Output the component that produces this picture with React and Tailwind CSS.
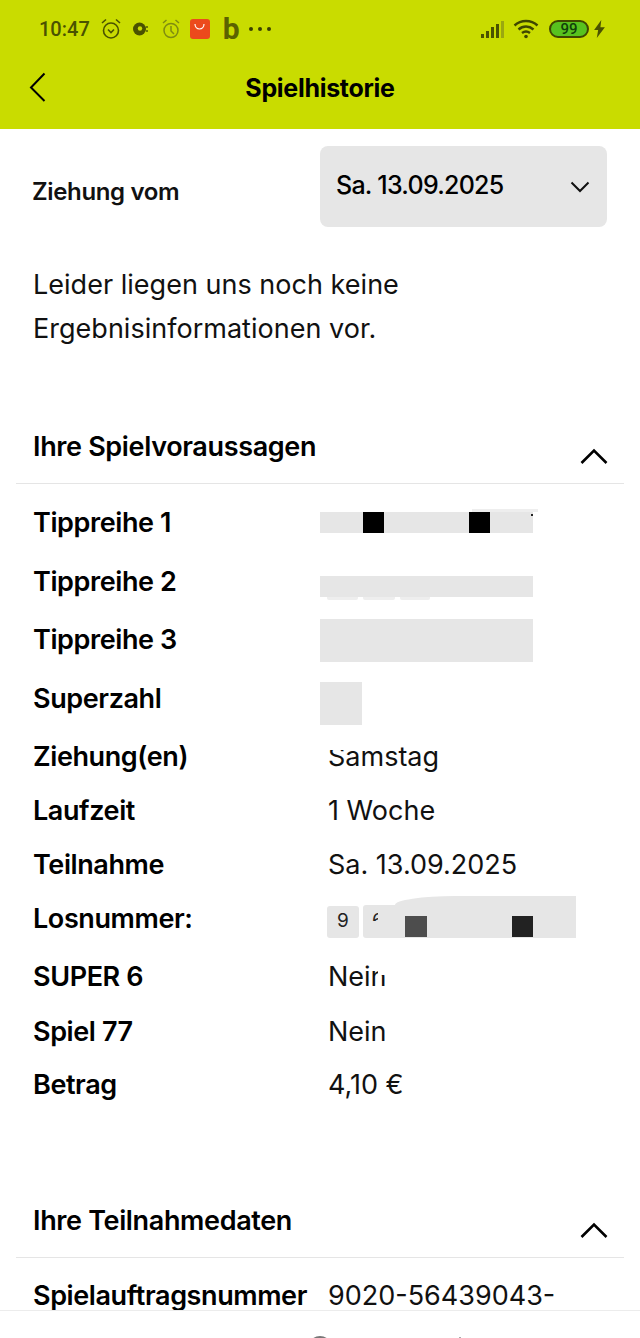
import React from "react";

function Chevron({ className }) {
  return (
    <svg className={className} width="28" height="16" viewBox="0 0 28 16" fill="none" stroke="#000" strokeWidth="2.6">
      <path d="M1.500 15 L14 2.500 L26.500 15" />
    </svg>
  );
}

function Row({ label, value, h = "h-[54px]", extra = "", children }) {
  return (
    <div className={`flex items-center ${h} ${extra} pl-[33px]`}>
      <div className="w-[295px] shrink-0 text-[27px] font-semibold tracking-[-0.4px] text-black">{label}</div>
      {value && <div className="text-[27px] font-normal tracking-[0px] text-[#111]">{value}</div>}
      {children}
    </div>
  );
}

function Section({ title }) {
  return (
    <div className="mx-4 flex h-[77px] items-start justify-between border-b border-[#e5e5e5] pl-[17px] pr-[16px]">
      <div className="mt-[20px] text-[27px] font-semibold tracking-[-0.35px] text-black">{title}</div>
      <Chevron className="mt-[41px]" />
    </div>
  );
}

function Block({ children, className }) {
  return <div className={`relative bg-[#e6e6e6] ${className}`}>{children}</div>;
}

export default function App() {
  return (
    <div className="relative h-[1338px] w-[640px] overflow-hidden bg-white font-['Inter',sans-serif]">
      <header className="h-[129px] bg-[#c9dc00]">
        <div className="flex h-[58px] items-center justify-between pl-[39px] pr-[35px] text-[#4a5200]">
          <div className="flex items-center">
            <span className="font-['Roboto',sans-serif] text-[20px] font-medium leading-none">10:47</span>
            <svg className="ml-[10px]" width="22" height="22" viewBox="0 0 22 22" fill="none" stroke="#4a5200" strokeWidth="1.6">
              <circle cx="11" cy="12.500" r="7.500" />
              <path d="M8 11.500l3 3 3-3M2 5l4-3.500M20 5l-4-3.500" />
            </svg>
            <svg className="ml-[10px]" width="18" height="18" viewBox="0 0 18 18">
              <circle cx="7.500" cy="9" r="6.500" fill="#4a5200" />
              <circle cx="8" cy="8.500" r="2.200" fill="#c9dc00" />
              <path d="M15 6v2M15 10v2" stroke="#4a5200" strokeWidth="1.400" />
            </svg>
            <svg className="ml-[11px]" width="20" height="22" viewBox="0 0 20 22" fill="none" stroke="#7f8c10" strokeWidth="1.500">
              <circle cx="10" cy="12.500" r="7" />
              <path d="M10 8v5l3 3M2 5l3.500-3M18 5l-3.500-3" />
            </svg>
            <div className="ml-[9px] flex h-[20px] w-[20px] items-start justify-center rounded-[3px] bg-[#ec4a1c] pt-[4px]">
              <svg width="11" height="7" viewBox="0 0 11 7" fill="none" stroke="#fff" strokeWidth="1.200">
                <path d="M1 1c0 3 2 5 4.500 5S10 4 10 1" />
              </svg>
            </div>
            <span className="ml-[13px] font-['Roboto',sans-serif] text-[30px] font-bold leading-none text-[#5b6200]">b</span>
            <span className="ml-[9px] flex gap-[5px]">
              <i className="h-[4px] w-[4px] rounded-full bg-[#3a4000]" />
              <i className="h-[4px] w-[4px] rounded-full bg-[#3a4000]" />
              <i className="h-[4px] w-[4px] rounded-full bg-[#3a4000]" />
            </span>
          </div>
          <div className="flex items-center">
            <svg width="24" height="17" viewBox="0 0 24 17" fill="#4a5200">
              <rect x="0" y="13" width="3" height="4" />
              <rect x="5" y="10" width="3" height="7" />
              <rect x="10" y="6" width="3" height="11" />
              <rect x="15" y="3" width="3" height="14" />
              <rect x="20" y="0" width="3" height="17" fill="#9aa810" />
            </svg>
            <svg className="ml-[8px]" width="26" height="22" viewBox="0 0 26 22" fill="none" stroke="#3f4700" strokeWidth="2.400">
              <path d="M1.500 7.500C8 1.500 18 1.500 24.500 7.500M5.500 11.500C10 7.500 16 7.500 20.500 11.500M9 15c2.500-2 5.500-2 8 0" />
              <circle cx="13" cy="18.500" r="1.800" fill="#3f4700" stroke="none" />
            </svg>
            <div className="ml-[10px] flex h-[18px] w-[40px] items-center justify-center rounded-[9px] border-2 border-[#3f4700] bg-[#58c21e] font-['Roboto',sans-serif] text-[15px] font-medium leading-none text-[#10400a]">
              99
            </div>
            <svg className="ml-[5px]" width="11" height="18" viewBox="0 0 12 20" fill="#4a5200">
              <path d="M8 0L0 11h4.500L3 20l9-12H7z" />
            </svg>
          </div>
        </div>
        <div className="relative flex h-[60px] items-center justify-center">
          <svg className="absolute left-[29px] top-[14px]" width="17" height="30" viewBox="0 0 17 30" fill="none" stroke="#000" strokeWidth="2">
            <path d="M15.500 1.500L2 15.500l13.500 13.500" />
          </svg>
          <h1 className="mt-[2px] text-[25px] font-bold tracking-[-0.3px] text-black">Spielhistorie</h1>
        </div>
      </header>

      <div className="flex items-center justify-between pl-[32px] pr-[33px] pt-[17px]">
        <div className="mt-[10px] text-[24px] font-semibold tracking-[-0.35px] text-[#111]">Ziehung vom</div>
        <div className="flex h-[81px] w-[287px] items-start justify-between rounded-[8px] bg-[#e6e6e6] pl-[16px] pr-[17px] pt-[21px]">
          <span className="text-[25px] font-medium tracking-[-0.75px] text-black">Sa. 13.09.2025</span>
          <svg className="mt-[14px]" width="20" height="12" viewBox="0 0 20 12" fill="none" stroke="#111" strokeWidth="2">
            <path d="M1.500 1.500L10 10l8.500-8.500" />
          </svg>
        </div>
      </div>

      <p className="mt-[36px] pl-[33px] text-[27px] font-normal leading-[44px] tracking-[0.02px] text-[#111]">
        Leider liegen uns noch keine
        <br />
        Ergebnisinformationen vor.
      </p>

      <div className="mt-[56px]">
        <Section title="Ihre Spielvoraussagen" />
      </div>

      <div className="pt-[10px]">
        <Row label="Tippreihe 1" h="h-[59px]">
          <Block className="-ml-[8px] flex h-[21px] w-[213px] translate-y-[-1px]">
            <span className="absolute left-[43px] top-0 h-[21px] w-[21px] bg-black" />
            <span className="absolute left-[149px] top-0 h-[21px] w-[21px] bg-black" />
            <span className="absolute left-[152px] top-[-3px] h-[3px] w-[66px] bg-[#eeeeee]" />
            <span className="absolute left-[211px] top-[2px] h-[2px] w-[2px] bg-[#222]" />
          </Block>
        </Row>
        <Row label="Tippreihe 2" h="h-[58px]">
          <Block className="-ml-[8px] mt-[8px] h-[21px] w-[213px]">
            <span className="absolute left-[7px] top-[21px] h-[3px] w-[31px] rounded-b-[2px] bg-[#eeeeee]" />
            <span className="absolute left-[43px] top-[21px] h-[3px] w-[32px] rounded-b-[2px] bg-[#eeeeee]" />
            <span className="absolute left-[80px] top-[21px] h-[3px] w-[30px] rounded-b-[2px] bg-[#eeeeee]" />
          </Block>
        </Row>
        <Row label="Tippreihe 3" h="h-[59px]">
          <Block className="-ml-[8px] mt-[-1px] h-[43px] w-[213px]" />
        </Row>
        <Row label="Superzahl" h="h-[59px]">
          <Block className="-ml-[8px] mt-[8px] h-[43px] w-[42px]" />
        </Row>
        <Row label="Ziehung(en)" h="h-[55px]" extra="pt-[2px]">
          <div className="relative text-[27px] font-normal text-[#111]">
            Samstag
            <span className="absolute left-0 top-0 h-[13px] w-[17px] bg-white" />
          </div>
        </Row>
        <Row label="Laufzeit" value="1 Woche" />
        <Row label="Teilnahme" value="Sa. 13.09.2025" />
        <Row label="Losnummer:">
          <div className="-ml-[1px] mt-[5px] flex items-center gap-[4px]">
            <div className="flex h-[32px] w-[32px] items-center justify-center rounded-[3px] bg-[#e6e6e6] text-[19px] text-[#222]">9</div>
            <Block className="h-[33px] w-[213px] rounded-l-[3px]">
              <span className="absolute left-[9px] top-[2px] text-[19px] leading-[28px] text-[#222]">6</span>
              <span className="absolute left-[7px] top-[16px] h-[16px] w-[18px] bg-[#e6e6e6]" />
              <span className="absolute left-[15px] top-[4px] h-[14px] w-[10px] bg-[#e6e6e6]" />
              <span className="absolute left-[32px] top-[-9px] h-[9px] w-[181px] rounded-tl-[60px_9px] bg-[#e6e6e6]" />
              <span className="absolute left-[42px] top-[11px] h-[21px] w-[22px] bg-[#4d4d4d]" />
              <span className="absolute left-[149px] top-[11px] h-[21px] w-[21px] bg-[#222]" />
            </Block>
          </div>
        </Row>
        <Row label="SUPER 6" h="h-[62px]">
          <div className="relative text-[27px] font-normal text-[#111]">
            Nein
            <span className="absolute right-[-1px] top-[5px] h-[13px] w-[10px] bg-white" />
          </div>
        </Row>
        <Row label="Spiel 77" value="Nein" h="h-[48px]" />
        <Row label="Betrag" value="4,10 €" h="h-[58px]" />
      </div>

      <div className="mt-[67px]">
        <Section title="Ihre Teilnahmedaten" />
      </div>

      <div className="pt-[11px]">
        <Row label="Spielauftragsnummer" value="9020-56439043-" />
      </div>

      <div className="absolute bottom-0 left-0 right-0 h-[28px] overflow-hidden border-t border-[#ececec] bg-white">
        <span className="absolute left-[308px] top-[25px] h-[24px] w-[24px] rounded-full border-2 border-[#777]" />
        <span className="absolute left-[459px] top-[26px] h-[2px] w-[2px] bg-[#aaa]" />
      </div>
    </div>
  );
}
